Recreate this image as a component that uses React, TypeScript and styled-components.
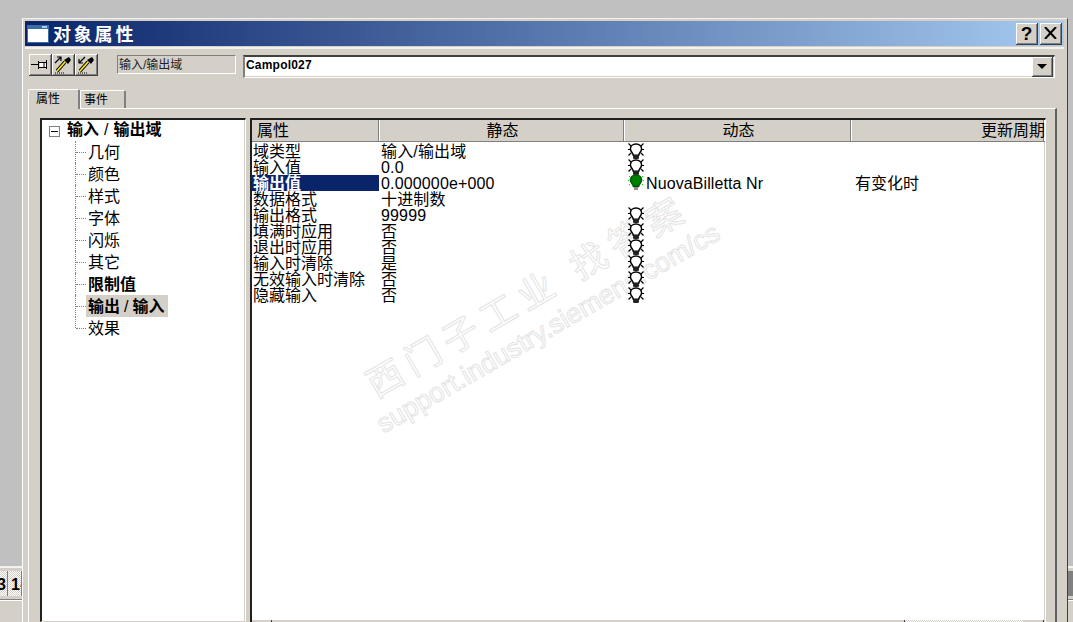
import React from 'react';
import styled, { createGlobalStyle } from 'styled-components';

const PANEL = '#d4d0c8';
const FONT = `"Liberation Sans", "Noto Sans CJK SC", sans-serif`;
const DITHER = `repeating-conic-gradient(${PANEL} 0 25%, #fff 0 50%) 0 0 / 2px 2px`;

const GlobalStyle = createGlobalStyle`
  html, body {
    margin: 0;
    padding: 0;
    overflow: hidden;
    background: #c0c0c0;
  }
`;

const Page = styled.div`
  display: grid;
  grid-template-columns: 22px 1046px 5px;
  width: 1073px;
  height: 622px;
  overflow: hidden;
  font-family: ${FONT};
  color: #000;
`;

const Gutter = styled.div`
  display: flex;
  flex-direction: column;
  padding-top: 566px;
  overflow: hidden;
`;

const GutterPanel = styled.div`
  flex: 1;
  background: ${PANEL};
  border-top: 2px solid #f4f2ee;
  padding-top: 3px;
`;

const CellStrip = styled.div`
  display: flex;
  gap: 1px;
  height: 25px;
  border-bottom: 3px solid ${PANEL};
  box-shadow: 0 1px 0 #808080, 0 2px 0 #fff;
  background: #808080;
`;

const Cell = styled.div<{ $w: number; $x: number }>`
  width: ${p => p.$w}px;
  flex: none;
  background: ${DITHER};
  overflow: hidden;
  font-size: 16px;
  font-weight: bold;
  line-height: 28px;
  text-indent: ${p => p.$x}px;
  white-space: nowrap;
`;

const Window = styled.div`
  display: flex;
  flex-direction: column;
  margin-top: 18px;
  padding: 2px 3px 0 2px;
  background: ${PANEL};
  border-top: 1px solid #f4f2ee;
  border-left: 1px solid #fff;
  border-right: 1px solid #404040;
  min-height: 0;
`;

const TitleBar = styled.div`
  display: flex;
  align-items: center;
  height: 25px;
  flex: none;
  padding: 0 2px;
  background: linear-gradient(90deg, #0a246a 0%, #a6caf0 100%);
  border-bottom: 1px solid ${PANEL};
  box-shadow: 0 2px 0 #f4f2ee;
`;

const TitleText = styled.div`
  margin-left: 4px;
  padding-top: 4px;
  color: #fff;
  font-size: 18px;
  font-weight: bold;
  letter-spacing: 2.8px;
  line-height: 25px;
`;

const TitleButtons = styled.div`
  display: flex;
  gap: 2px;
  margin-left: auto;
`;

const raised = `
  background: ${PANEL};
  border-right: 1px solid #404040;
  border-bottom: 1px solid #404040;
  box-shadow: inset 1px 1px 0 #fff, inset -1px -1px 0 #808080;
`;

const CaptionButton = styled.div`
  ${raised}
  display: flex;
  align-items: center;
  justify-content: center;
  width: 21px;
  height: 21px;
  font-size: 19px;
  font-weight: bold;
  line-height: 21px;
`;

const Toolbar = styled.div`
  display: flex;
  align-items: flex-start;
  flex: none;
  padding: 7px 2px 0 4px;
`;

const ToolButton = styled.div`
  ${raised}
  display: flex;
  align-items: center;
  justify-content: center;
  width: 22px;
  height: 21px;
`;

const TypeLabel = styled.div`
  width: 119px;
  height: 19px;
  box-sizing: border-box;
  margin: 1px 7px 0 19px;
  padding-left: 1px;
  border: 1px solid;
  border-color: #808080 #fff #fff #808080;
  font-size: 12px;
  line-height: 19px;
  color: #222;
  white-space: nowrap;
`;

const Combo = styled.div`
  display: flex;
  align-items: stretch;
  width: 812px;
  height: 23px;
  box-sizing: border-box;
  margin-top: 1px;
  background: #fff;
  border-top: 2px solid #404040;
  border-left: 2px solid #808080;
  border-right: 1px solid #fff;
  border-bottom: 1px solid #fff;
  box-shadow: inset -1px -1px 0 ${PANEL};
`;

const ComboValue = styled.div`
  flex: 1;
  padding-left: 1px;
  font-size: 12px;
  font-weight: bold;
  letter-spacing: 0.2px;
  line-height: 17px;
`;

const ComboArrow = styled.div`
  ${raised}
  display: flex;
  align-items: center;
  justify-content: center;
  width: 20px;
  height: 19px;
  margin-right: 1px;
  &::before {
    content: '';
    border-style: solid;
    border-width: 5px 5px 0;
    border-color: #000 transparent transparent;
  }
`;

const TabStrip = styled.div`
  display: flex;
  align-items: flex-end;
  flex: none;
  height: 19px;
  margin-top: 11px;
  padding-left: 3px;
`;

const Tab = styled.div<{ $active?: boolean }>`
  box-sizing: border-box;
  width: ${p => (p.$active ? 52 : 46)}px;
  height: ${p => (p.$active ? 20 : 18)}px;
  padding-left: ${p => (p.$active ? 7 : 3)}px;
  background: ${PANEL};
  border-top: 1px solid #fff;
  border-left: 1px solid #fff;
  border-right: 2px solid #808080;
  border-radius: 2px 2px 0 0;
  font-size: 12px;
  line-height: ${p => (p.$active ? 18 : 19)}px;
  position: relative;
  z-index: ${p => (p.$active ? 1 : 0)};
  margin-bottom: ${p => (p.$active ? -1 : 0)}px;
`;

const TabPane = styled.div`
  display: flex;
  flex: 1;
  gap: 4px;
  min-height: 0;
  margin-left: 3px;
  margin-right: 7px;
  padding: 9px 11px 0;
  border-top: 1px solid #fff;
  border-left: 1px solid #fff;
  border-right: 2px solid #606060;
`;

const sunken = `
  background: #fff;
  border-top: 2px solid #202020;
  border-left: 2px solid #202020;
  border-right: 1px solid #fff;
  border-bottom: 1px solid ${PANEL};
  box-shadow: inset -1px 0 0 ${PANEL};
`;

const Tree = styled.div`
  ${sunken}
  width: 206px;
  flex: none;
  box-sizing: border-box;
  font-size: 16px;
`;

const TreeRoot = styled.div`
  display: flex;
  align-items: center;
  height: 21px;
  padding-left: 7px;
  line-height: 17px;
  font-weight: bold;
  white-space: nowrap;
`;

const RootText = styled.span`
  margin-top: -2px;
`;

const Expander = styled.div`
  position: relative;
  width: 11px;
  height: 11px;
  box-sizing: border-box;
  margin: 1px 7px 0 0;
  border: 1px solid #808080;
  &::before {
    content: '';
    position: absolute;
    left: 1px;
    right: 1px;
    top: 4px;
    height: 1px;
    background: #000;
  }
`;

const WideSlash = styled.span<{ $gap: number }>`
  margin: 0 ${p => p.$gap}px;
  font-weight: normal;
`;

const TreeList = styled.div`
  margin-left: 33px;
`;

const TreeItem = styled.div`
  position: relative;
  height: 22px;
  padding-left: 11px;
  line-height: 23px;
  white-space: nowrap;
  &::before {
    content: '';
    position: absolute;
    left: 0;
    top: 0;
    bottom: 0;
    border-left: 1px dotted #808080;
  }
  &:last-child::before {
    bottom: 11px;
  }
  &::after {
    content: '';
    position: absolute;
    left: 1px;
    top: 11px;
    width: 10px;
    border-top: 1px dotted #808080;
  }
`;

const TreeLabel = styled.span<{ $bold?: boolean; $selected?: boolean }>`
  display: inline-block;
  height: 22px;
  padding: 0 4px 0 2px;
  font-weight: ${p => (p.$bold ? 'bold' : 'normal')};
  background: ${p => (p.$selected ? PANEL : 'transparent')};
`;

const List = styled.div`
  ${sunken}
  position: relative;
  display: flex;
  flex-direction: column;
  width: 796px;
  flex: none;
  box-sizing: border-box;
  overflow: hidden;
  font-size: 16px;
  border-bottom: none;
`;

const columns = 'grid-template-columns: 128px 245px 227px 1fr;';

const HeaderRow = styled.div`
  display: grid;
  ${columns}
  flex: none;
  height: 21px;
  background: ${PANEL};
  border-bottom: 1px solid #808080;
`;

const HeaderCell = styled.div<{ $align: string }>`
  box-sizing: border-box;
  padding: 0 ${p => (p.$align === 'right' ? 0 : 5)}px;
  text-align: ${p => p.$align};
  line-height: 21px;
  white-space: nowrap;
  box-shadow: inset -1px 0 0 #fff, inset -2px 0 0 #808080;
`;

const Rows = styled.div`
  position: relative;
  z-index: 1;
  flex: 1;
  padding-top: 1px;
`;

const Row = styled.div`
  display: grid;
  ${columns}
  height: 16px;
  line-height: 18px;
  white-space: nowrap;
`;

const NameCell = styled.div<{ $selected?: boolean }>`
  margin-right: 1px;
  padding-left: 1px;
  height: 16px;
  background: ${p => (p.$selected ? '#0a246a' : 'transparent')};
  color: ${p => (p.$selected ? '#fff' : '#000')};
  font-weight: ${p => (p.$selected ? 'bold' : 'normal')};
`;

const ValueCell = styled.div`
  padding-left: 1px;
  letter-spacing: 0.15px;
`;

const DynamicCell = styled.div`
  display: flex;
  align-items: flex-start;
  padding-left: 3px;
`;

const DynamicText = styled.span`
  margin-left: 2px;
  letter-spacing: 0.1px;
`;

const CycleCell = styled.div`
  padding-left: 3px;
`;

const ScrollBar = styled.div`
  display: flex;
  flex: none;
  height: 2px;
  margin-right: 1px;
`;

const ScrollPart = styled.div<{ $w?: number; $track?: boolean }>`
  flex: ${p => (p.$w ? `0 0 ${p.$w}px` : 1)};
  background: ${p => (p.$track ? DITHER : PANEL)};
  box-shadow: inset -1px 0 0 ${p => (p.$track ? 'transparent' : '#404040')};
`;

const Watermark = styled.div<{ $left: number; $top: number; $size: number; $spacing: number }>`
  position: absolute;
  left: ${p => p.$left}px;
  top: ${p => p.$top}px;
  font-size: ${p => p.$size}px;
  letter-spacing: ${p => p.$spacing}px;
  line-height: 1;
  white-space: pre;
  color: #fff;
  -webkit-text-stroke: 1px #e4e4e4;
  transform: rotate(-30deg);
  transform-origin: 0 50%;
  pointer-events: none;
`;

const WindowIcon = () => (
  <svg width="22" height="18" viewBox="0 0 22 18">
    <rect x="0" y="0" width="22" height="18" fill="#3a6ea5" />
    <rect x="1" y="4" width="20" height="13" fill="#fff" />
    <rect x="15" y="1" width="5" height="2" fill="#a6caf0" />
  </svg>
);

const PinIcon = () => (
  <svg width="18" height="14" viewBox="0 0 18 14" shapeRendering="crispEdges">
    <rect x="0" y="6" width="8" height="1" fill="#000" />
    <rect x="7" y="3" width="1" height="8" fill="#000" />
    <rect x="8" y="4" width="8" height="1" fill="#000" />
    <rect x="8" y="9" width="8" height="1" fill="#000" />
    <rect x="9" y="5" width="6" height="4" fill="#fff" />
    <rect x="15" y="2" width="1" height="9" fill="#000" />
    <rect x="12" y="5" width="2" height="4" fill="#808080" />
  </svg>
);

const DropperIcon = ({ down }: { down?: boolean }) => (
  <svg width="18" height="18" viewBox="0 0 18 18">
    <path d="M3 15 L11 6" stroke="#000" strokeWidth="3.4" />
    <path d="M3 15 L11 6" stroke="#ffe600" strokeWidth="1.8" />
    <path d="M10 4 L14 8 L17 4 L15 1 Z" fill="#000" />
    {down ? (
      <path d="M8 1 L2 7 M2 3 L2 7 L6 7" stroke="#000" strokeWidth="1.2" fill="none" />
    ) : (
      <path d="M1 7 L7 1 M3 1 L7 1 L7 5" stroke="#000" strokeWidth="1.2" fill="none" />
    )}
    <path d="M1 17 H11" stroke="#000" strokeWidth="1" strokeDasharray="1 1" />
  </svg>
);

const Bulb = ({ on }: { on?: boolean }) => (
  <svg width="16" height="17" viewBox="0 0 16 17" style={{ flex: 'none', marginTop: on ? -1 : 0 }}>
    <path
      d={
        on
          ? 'M1 2 L2 3 M15 2 L14 3 M0 6.5 H1 M15 6.5 H16 M1 11 L2 10 M15 11 L14 10'
          : 'M0.5 0.5 L3 3 M15.5 0.5 L13 3 M0 6.5 H2 M14 6.5 H16 M0.5 12.5 L3 10 M15.5 12.5 L13 10'
      }
      stroke={on ? '#00e000' : '#000'}
      strokeWidth={on ? 1 : 1.2}
    />
    <path
      d="M8 1 C4.4 1 2.4 3.4 2.4 6 C2.4 8.6 5 10 5.3 12.2 H10.7 C11 10 13.6 8.6 13.6 6 C13.6 3.4 11.6 1 8 1 Z"
      fill={on ? '#008000' : '#fff'}
      stroke={on ? '#006000' : '#000'}
      strokeWidth="1.5"
    />
    {on ? (
      <path d="M5.5 13 H10.5 M6 15 H10" stroke="#222" strokeWidth="1.1" />
    ) : (
      <rect x="5" y="12" width="6" height="4" rx="1.5" fill="#222" />
    )}
  </svg>
);

const treeItems = [
  { label: '几何' },
  { label: '颜色' },
  { label: '样式' },
  { label: '字体' },
  { label: '闪烁' },
  { label: '其它' },
  { label: '限制值', bold: true },
  { label: '输出/输入', bold: true, selected: true },
  { label: '效果' },
];

const rows = [
  { name: '域类型', value: '输入/输出域', bulb: true },
  { name: '输入值', value: '0.0', bulb: true },
  { name: '输出值', value: '0.000000e+000', on: true, dynamic: 'NuovaBilletta  Nr', cycle: '有变化时', selected: true },
  { name: '数据格式', value: '十进制数' },
  { name: '输出格式', value: '99999', bulb: true },
  { name: '填满时应用', value: '否', bulb: true },
  { name: '退出时应用', value: '否', bulb: true },
  { name: '输入时清除', value: '是', bulb: true },
  { name: '无效输入时清除', value: '否', bulb: true },
  { name: '隐藏输入', value: '否', bulb: true },
];

function SlashedText({ text, gap }: { text: string; gap: number }) {
  const parts = text.split('/');
  if (parts.length < 2) return <>{text}</>;
  return (
    <>
      {parts[0]}
      <WideSlash $gap={gap}>/</WideSlash>
      {parts[1]}
    </>
  );
}

export default function App() {
  return (
    <Page>
      <GlobalStyle />
      <Gutter>
        <GutterPanel>
          <CellStrip>
            <Cell $w={7} $x={-3}>3</Cell>
            <Cell $w={13} $x={3}>1-</Cell>
          </CellStrip>
        </GutterPanel>
      </Gutter>
      <Window>
        <TitleBar>
          <WindowIcon />
          <TitleText>对象属性</TitleText>
          <TitleButtons>
            <CaptionButton>?</CaptionButton>
            <CaptionButton>
              <svg width="13" height="12" viewBox="0 0 13 12">
                <path d="M1 0 L12 12 M12 0 L1 12" stroke="#000" strokeWidth="2" />
              </svg>
            </CaptionButton>
          </TitleButtons>
        </TitleBar>
        <Toolbar>
          <ToolButton><PinIcon /></ToolButton>
          <ToolButton><DropperIcon /></ToolButton>
          <ToolButton><DropperIcon down /></ToolButton>
          <TypeLabel>输入/输出域</TypeLabel>
          <Combo>
            <ComboValue>Campol027</ComboValue>
            <ComboArrow />
          </Combo>
        </Toolbar>
        <TabStrip>
          <Tab $active>属性</Tab>
          <Tab>事件</Tab>
        </TabStrip>
        <TabPane>
          <Tree>
            <TreeRoot>
              <Expander />
              <RootText><SlashedText text="输入/输出域" gap={5} /></RootText>
            </TreeRoot>
            <TreeList>
              {treeItems.map(item => (
                <TreeItem key={item.label}>
                  <TreeLabel $bold={item.bold} $selected={item.selected}>
                    <SlashedText text={item.label} gap={4} />
                  </TreeLabel>
                </TreeItem>
              ))}
            </TreeList>
          </Tree>
          <List>
            <HeaderRow>
              <HeaderCell $align="left">属性</HeaderCell>
              <HeaderCell $align="center">静态</HeaderCell>
              <HeaderCell $align="center">动态</HeaderCell>
              <HeaderCell $align="right">更新周期</HeaderCell>
            </HeaderRow>
            <Rows>
              {rows.map(row => (
                <Row key={row.name}>
                  <NameCell $selected={row.selected}>{row.name}</NameCell>
                  <ValueCell>{row.value}</ValueCell>
                  <DynamicCell>
                    {(row.bulb || row.on) && <Bulb on={row.on} />}
                    {row.dynamic && <DynamicText>{row.dynamic}</DynamicText>}
                  </DynamicCell>
                  <CycleCell>{row.cycle}</CycleCell>
                </Row>
              ))}
            </Rows>
            <ScrollBar>
              <ScrollPart $w={20} />
              <ScrollPart $w={633} />
              <ScrollPart $track />
              <ScrollPart $w={21} />
            </ScrollBar>
            <Watermark $left={118} $top={250} $size={36} $spacing={7.5}>西门子工业 找答案</Watermark>
            <Watermark $left={127} $top={293} $size={27} $spacing={0}>support.industry.siemens.com/cs</Watermark>
          </List>
        </TabPane>
      </Window>
      <Gutter>
        <GutterPanel>
          <CellStrip />
        </GutterPanel>
      </Gutter>
    </Page>
  );
}
